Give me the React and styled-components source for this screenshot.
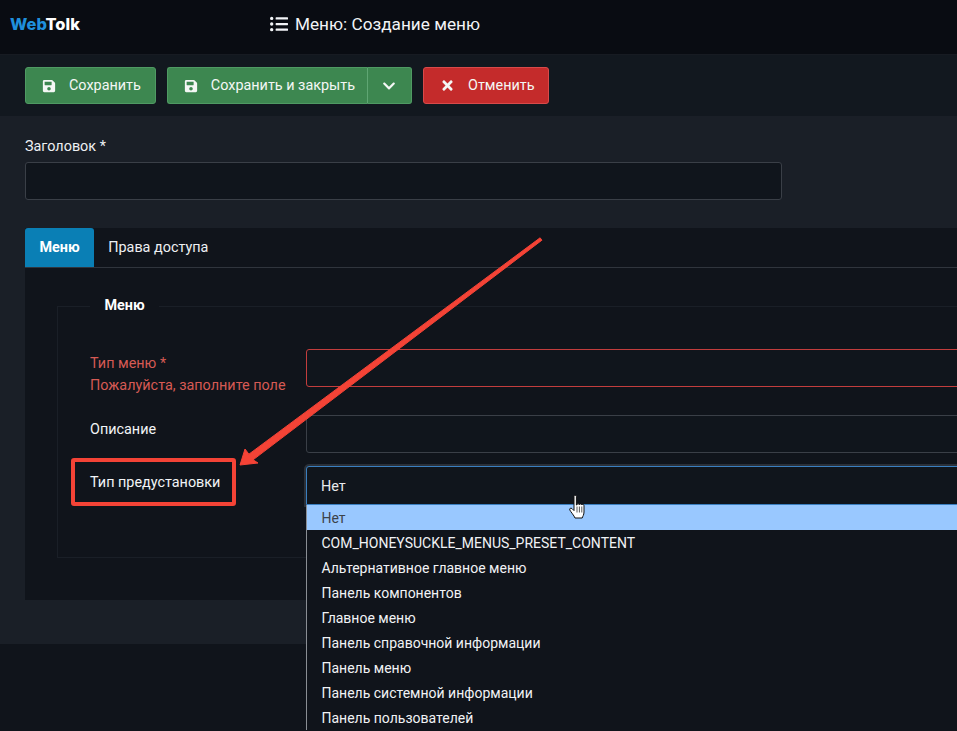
import React from 'react';
import styled, { createGlobalStyle } from 'styled-components';
import { FaSave, FaListUl, FaTimes, FaChevronDown } from 'react-icons/fa';

const Global = createGlobalStyle`
  html, body { margin: 0; padding: 0; height: 100%; overflow: hidden; background: #10141b; }
  * { box-sizing: border-box; }
  body { font-family: Roboto, "Liberation Sans", sans-serif; font-size: 14.4px; color: #f0f2f5; }
`;

const Page = styled.div`
  position: relative;
  width: 957px;
  height: 731px;
  overflow: hidden;
  background: #10141b;
`;
const Header = styled.header`
  height: 55px;
  padding-bottom: 6px;
  display: flex;
  align-items: center;
  background: #090c12;
  border-bottom: 1px solid #171b22;
`;
const Logo = styled.div`
  width: 270px;
  padding-left: 10px;
  font-family: Inter, Roboto, sans-serif;
  font-size: 16.4px;
  font-weight: 800;
  color: #fff;
  span { color: #1f8fdc; }
`;
const PageTitle = styled.h1`
  margin: 0;
  display: flex;
  align-items: center;
  gap: 7px;
  font-size: 17.2px;
  font-weight: 400;
  color: #f2f4f7;
`;
const Toolbar = styled.div`
  height: 61px;
  padding: 12px 25px 0;
  display: flex;
  gap: 11px;
  background: #12181f;
`;
const Btn = styled.button`
  height: 37px;
  display: flex;
  align-items: center;
  padding: 0 ${p => p.$split ? '15px' : '14px'} 0 ${p => p.$split ? '14px' : '16px'};
  gap: 13px;
  border: 1px solid ${p => p.$red ? '#d84a4a' : '#4f9a63'};
  border-radius: 3px;
  background: ${p => p.$red ? '#c42b2b' : '#3d8750'};
  color: #f4f7f5;
  font: 400 14.4px Roboto, sans-serif;
`;
const SplitGroup = styled.div`
  display: flex;
  ${Btn}:first-child { border-radius: 3px 0 0 3px; border-right: 0; padding-right: 12px; }
  ${Btn}:last-child { border-radius: 0 3px 3px 0; border-left: 1px solid #5fa673; }
`;
const Content = styled.main`
  height: 528px;
  padding: 23px 0 0 25px;
  background: #1a1f27;
`;
const TitleLabel = styled.label`
  display: block;
  height: 23px;
  line-height: 16px;
  color: #eef0f3;
`;
const Input = styled.div`
  height: 38px;
  width: ${p => p.$w || '100%'};
  background: #10151c;
  border: 1px solid ${p => p.$error ? '#c23d3d' : '#3a3f47'};
  border-radius: 3px;
`;
const TabsPanel = styled.section`
  margin-top: 28px;
  height: 372px;
  margin-right: -40px;
  background: #10141b;
`;
const TabBar = styled.div`
  display: flex;
  height: 40px;
  border-bottom: 1px solid #30353d;
`;
const Tab = styled.div`
  display: flex;
  align-items: center;
  padding: 0 ${p => p.$active ? '14.5px' : '14px'};
  font-weight: ${p => p.$active ? 700 : 400};
  color: ${p => p.$active ? '#fff' : '#eef0f3'};
  background: ${p => p.$active ? '#0a7fb5' : 'transparent'};
  border-radius: ${p => p.$active ? '3px 3px 0 0' : '0'};
`;
const Fieldset = styled.div`
  margin: 38px 0 0 32px;
  padding: 42px 0 0 32px;
  height: 252px;
  border-top: 1px solid #1a1f27;
  border-left: 1px solid #1a1f27;
  border-bottom: 1px solid #1a1f27;
  position: relative;
`;
const Legend = styled.div`
  position: absolute;
  top: -9px;
  left: 32px;
  padding: 0 14.5px;
  background: #10141b;
  font-weight: 700;
  line-height: 16px;
  color: #fff;
`;
const Row = styled.div`
  display: grid;
  grid-template-columns: 216px 1fr;
  margin-bottom: ${p => p.$mb}px;
`;
const FieldLabel = styled.div`
  line-height: 22px;
  padding-top: ${p => p.$pt ?? 4}px;
  color: ${p => p.$error ? '#d65a54' : '#f2f4f7'};
`;
const SelectWrap = styled.div`
  position: relative;
`;
const SelectBox = styled.div`
  height: 39px;
  padding: 2px 14px 0;
  display: flex;
  align-items: center;
  background: #10151c;
  border: 1px solid #3a7fc0;
  border-radius: 3px 3px 0 0;
  box-shadow: 0 0 0 2px #2a3039;
  color: #e8eaed;
`;
const Dropdown = styled.ul`
  position: absolute;
  top: 39px;
  left: 0;
  right: 0;
  margin: 0;
  padding: 0;
  list-style: none;
  background: #10141b;
  border-left: 1px solid #8a8e94;
  z-index: 2;
`;
const Option = styled.li`
  height: 25px;
  line-height: 25px;
  padding: 1px 0 0 14.5px;
  font-size: 14px;
  color: ${p => p.$sel ? '#3c4249' : '#f0f2f5'};
  background: ${p => p.$sel ? '#99c8ff' : 'transparent'};
`;
const Highlight = styled.div`
  position: absolute;
  left: 71px;
  top: 458px;
  width: 165px;
  height: 48px;
  border: 4px solid #f44336;
  border-radius: 3px;
  z-index: 3;
`;
const ArrowSvg = styled.svg`
  position: absolute;
  left: 0;
  top: 0;
  z-index: 3;
  pointer-events: none;
`;
const Cursor = styled.svg`
  position: absolute;
  left: 568px;
  top: 494px;
  z-index: 4;
`;

const options = ['Нет','COM_HONEYSUCKLE_MENUS_PRESET_CONTENT','Альтернативное главное меню','Панель компонентов','Главное меню','Панель справочной информации','Панель меню','Панель системной информации','Панель пользователей'];

export default function App() {
  return (
    <Page>
      <Global />
      <Header>
        <Logo><span>Web</span>Tolk</Logo>
        <PageTitle><FaListUl size={18} />Меню: Создание меню</PageTitle>
      </Header>
      <Toolbar>
        <Btn><FaSave size={14} />Сохранить</Btn>
        <SplitGroup>
          <Btn><FaSave size={14} />Сохранить и закрыть</Btn>
          <Btn $split><FaChevronDown size={14} /></Btn>
        </SplitGroup>
        <Btn $red><FaTimes size={15} />Отменить</Btn>
      </Toolbar>
      <Content>
        <TitleLabel>Заголовок *</TitleLabel>
        <Input $w="757px" />
        <TabsPanel>
          <TabBar>
            <Tab $active>Меню</Tab>
            <Tab>Права доступа</Tab>
          </TabBar>
          <Fieldset>
            <Legend>Меню</Legend>
            <Row $mb={18}>
              <FieldLabel $error>Тип меню *<br />Пожалуйста, заполните поле</FieldLabel>
              <Input $error />
            </Row>
            <Row $mb={13}>
              <FieldLabel>Описание</FieldLabel>
              <Input />
            </Row>
            <Row $mb={0}>
              <FieldLabel $pt={6}>Тип предустановки</FieldLabel>
              <SelectWrap>
                <SelectBox>Нет</SelectBox>
                <Dropdown>
                  {options.map((o, i) => <Option key={o} $sel={i === 0}>{o}</Option>)}
                </Dropdown>
              </SelectWrap>
            </Row>
          </Fieldset>
        </TabsPanel>
      </Content>
      <Highlight />
      <ArrowSvg width="957" height="731" viewBox="0 0 957 731">
        <polygon points="240,465 245,449 248.9,454.2 540.1,237.8 541.9,240.2 253.1,459.8 258,463" fill="#f44336" stroke="#f44336" strokeWidth="1" strokeLinejoin="round" />
      </ArrowSvg>
      <Cursor width="20" height="28" viewBox="0 0 20 28">
        <path d="M6 2.5c0-1.6 2.4-1.6 2.4 0V11l.6-.2c0-1.4 2.2-1.4 2.4 0 .2-1.2 2.2-1.2 2.4.2.4-1 2.2-.8 2.2.6v6.4c0 3-1.4 4.4-1.8 6H7c-.6-2-4.6-6.6-5.2-8-.6-1.6 1-2.4 2.2-1.4L6 16.6z" fill="#fff" stroke="#111" strokeWidth="1" />
        <path d="M9 12.5v6M11.4 12.5v6M13.8 12.5v6" stroke="#111" strokeWidth=".7" />
      </Cursor>
    </Page>
  );
}
